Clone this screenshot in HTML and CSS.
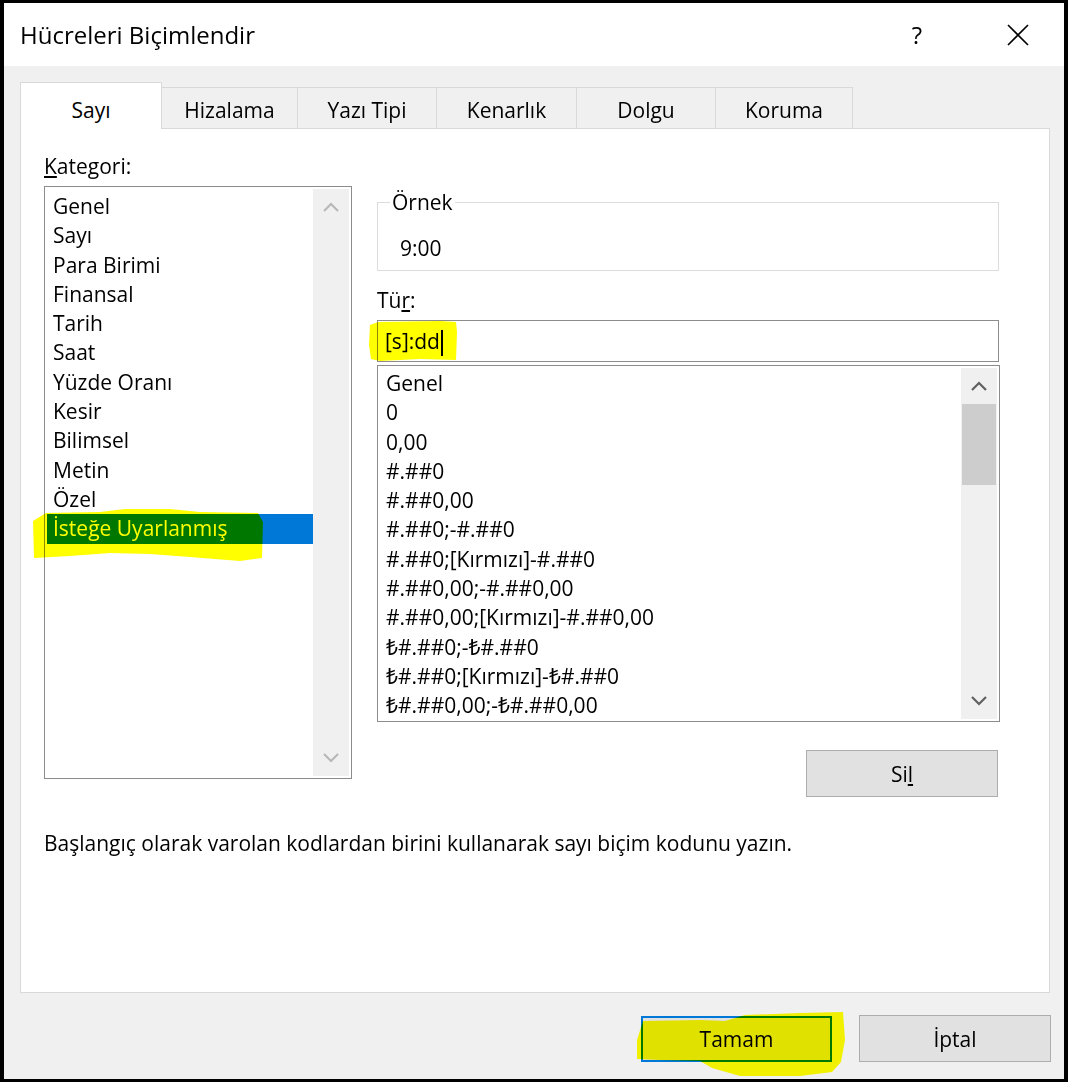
FILE: index.html
```html
<!DOCTYPE html>
<html>
<head>
    <title>Hücreleri Biçimlendir</title>
    <meta charset="utf-8" />
    <link rel="stylesheet" href="styles.css">
</head>
<body>
    <div class="screen">
        <div class="window">
            <div class="titlebar">
                <span class="title">Hücreleri Biçimlendir</span>
                <span class="help">?</span>
                <span class="close">
                    <svg width="22" height="22" viewBox="0 0 22 22"><path d="M1 1 L21 21 M21 1 L1 21" stroke="#000" stroke-width="1.6" fill="none"/></svg>
                </span>
            </div>
            <div class="content">
                <div class="tabs">
                    <div class="tab active" style="width:142px">Sayı</div>
                    <div class="tab" style="width:136px">Hizalama</div>
                    <div class="tab" style="width:139px">Yazı Tipi</div>
                    <div class="tab" style="width:140px">Kenarlık</div>
                    <div class="tab" style="width:139px">Dolgu</div>
                    <div class="tab" style="width:137px">Koruma</div>
                </div>
                <div class="panel">
                    <div class="panel-main">
                        <div class="col-left">
                            <div class="label"><u>K</u>ategori:</div>
                            <div class="listbox cat-list">
                                <ul class="items">
                                    <li>Genel</li>
                                    <li>Sayı</li>
                                    <li>Para Birimi</li>
                                    <li>Finansal</li>
                                    <li>Tarih</li>
                                    <li>Saat</li>
                                    <li>Yüzde Oranı</li>
                                    <li>Kesir</li>
                                    <li>Bilimsel</li>
                                    <li>Metin</li>
                                    <li>Özel</li>
                                    <li class="selected">İsteğe Uyarlanmış</li>
                                </ul>
                                <div class="scrollbar disabled">
                                    <div class="arrow"><svg width="16" height="10" viewBox="0 0 16 10"><path d="M1 9 L8 2 L15 9" /></svg></div>
                                    <div class="arrow"><svg width="16" height="10" viewBox="0 0 16 10"><path d="M1 1 L8 8 L15 1" /></svg></div>
                                </div>
                            </div>
                        </div>
                        <div class="col-right">
                            <fieldset class="sample">
                                <legend>Örnek</legend>
                                <div class="sample-value">9:00</div>
                            </fieldset>
                            <div class="label type-label">Tü<u>r</u>:</div>
                            <div class="type-input">[s]:dd<span class="caret"></span></div>
                            <div class="listbox fmt-list">
                                <ul class="items">
                                    <li>Genel</li>
                                    <li>0</li>
                                    <li>0,00</li>
                                    <li>#.##0</li>
                                    <li>#.##0,00</li>
                                    <li>#.##0;-#.##0</li>
                                    <li>#.##0;[Kırmızı]-#.##0</li>
                                    <li>#.##0,00;-#.##0,00</li>
                                    <li>#.##0,00;[Kırmızı]-#.##0,00</li>
                                    <li>₺#.##0;-₺#.##0</li>
                                    <li>₺#.##0;[Kırmızı]-₺#.##0</li>
                                    <li>₺#.##0,00;-₺#.##0,00</li>
                                </ul>
                                <div class="scrollbar">
                                    <div class="arrow"><svg width="16" height="10" viewBox="0 0 16 10"><path d="M1 9 L8 2 L15 9" /></svg></div>
                                    <div class="thumb"></div>
                                    <div class="track"></div>
                                    <div class="arrow"><svg width="16" height="10" viewBox="0 0 16 10"><path d="M1 1 L8 8 L15 1" /></svg></div>
                                </div>
                            </div>
                            <div class="delete-row">
                                <button class="btn">Si<u>l</u></button>
                            </div>
                        </div>
                    </div>
                    <p class="hint">Başlangıç olarak varolan kodlardan birini kullanarak sayı biçim kodunu yazın.</p>
                </div>
                <div class="footer">
                    <button class="btn btn-default">Tamam</button>
                    <button class="btn">İptal</button>
                </div>
            </div>
        </div>
        <!-- highlighter marks drawn over the screenshot -->
        <svg class="marks" width="1068" height="1082" viewBox="0 0 1068 1082">
            <path d="M33 521 L46 513 L100 512 L125 509 L170 509 L200 512 L258 513 L263 522 L262 558 L240 561 L190 557 L150 554 L110 553 L70 556 L34 558 Z" />
            <path d="M370 325 L378 322 L440 321 L456 322 L457 332 L456 360 L420 359 L380 361 L371 359 L369 345 Z" />
            <path d="M637 1040 L643 1021 L700 1020 L725 1021 L745 1015 L800 1013 L843 1012 L845 1040 L841 1062 L832 1072 L800 1076 L740 1076 L712 1068 L700 1061 L660 1060 L637 1059 Z" />
        </svg>
    </div>
</body>
</html>
```

FILE: styles.css
```css
body{
    margin:0;
    font-family:"Open Sans", "Noto Sans", sans-serif;
    font-size:21px;
    color:#000;
}
.screen{
    position:relative;
    width:1068px;
    height:1082px;
}
.window{
    box-sizing:border-box;
    width:1068px;
    height:1082px;
    border:solid #000;
    border-width:3px 4px 3px 4px;
    background:#f0f0f0;
    display:flex;
    flex-direction:column;
}
.titlebar{
    flex:none;
    height:63px;
    background:#fff;
    display:flex;
    align-items:center;
    padding-left:16px;
}
.title{
    flex:1;
    font-size:24px;
}
.help{
    width:30px;
    text-align:center;
    font-size:24px;
    margin-right:66px;
}
.close{
    width:40px;
    margin-right:26px;
    display:flex;
    justify-content:center;
}
.content{
    flex:1;
    padding:16px 14px 0 16px;
    display:flex;
    flex-direction:column;
}
.tabs{
    display:flex;
    align-items:flex-end;
    height:46px;
}
.tab{
    box-sizing:border-box;
    height:41px;
    border:1px solid #d9d9d9;
    border-left:none;
    border-bottom:none;
    background:#f0f0f0;
    text-align:center;
    line-height:26px;
    padding-top:9px;
}
.tab.active{
    height:47px;
    margin-bottom:-1px;
    border-left:1px solid #d9d9d9;
    background:#fff;
    padding-top:14px;
    position:relative;
    z-index:1;
}
.panel{
    box-sizing:border-box;
    height:865px;
    border:1px solid #d9d9d9;
    background:#fff;
    padding:24px 0 0 23px;
}
.panel-main{
    display:grid;
    grid-template-columns:308px 623px;
    column-gap:25px;
    align-items:start;
}
.label{
    line-height:26px;
    height:26px;
}
.listbox{
    box-sizing:border-box;
    border:1px solid #8c8c8c;
    padding:2px;
    display:flex;
    overflow:hidden;
}
.items{
    list-style:none;
    margin:0;
    padding:3px 0 0 0;
    flex:1;
}
.items li{
    line-height:29.3px;
    height:29.3px;
    padding-left:6px;
    white-space:nowrap;
}
.items li.selected{
    background:#0078d7;
    color:#fff;
}
.cat-list{
    margin-top:7px;
    height:593px;
}
.scrollbar{
    width:36px;
    background:#f0f0f0;
    display:flex;
    flex-direction:column;
}
.scrollbar .arrow{
    height:36px;
    display:flex;
    align-items:center;
    justify-content:center;
}
.scrollbar .arrow path{
    fill:none;
    stroke:#606060;
    stroke-width:2.2;
}
.scrollbar.disabled{
    justify-content:space-between;
}
.scrollbar.disabled .arrow path{
    stroke:#b8b8b8;
}
.scrollbar .thumb{
    height:81px;
    margin:0 1px;
    background:#cdcdcd;
}
.scrollbar .track{
    flex:1;
}
.sample{
    box-sizing:border-box;
    margin:36px 0 0 0;
    width:622px;
    height:82px;
    min-width:0;
    border:1px solid #dcdcdc;
    padding:20px 12px 0;
}
.sample legend{
    padding:0 2px;
    line-height:26px;
}
.sample-value{
    line-height:26px;
    padding-left:10px;
}
.type-label{
    margin-top:16px;
}
.type-input{
    box-sizing:border-box;
    margin-top:7px;
    height:42px;
    width:622px;
    border:1px solid #8c8c8c;
    padding-left:7px;
    line-height:40px;
}
.caret{
    display:inline-block;
    width:2px;
    height:26px;
    margin-left:1px;
    background:#000;
    vertical-align:middle;
}
.fmt-list{
    margin-top:3px;
    height:357px;
}
.fmt-list .items{
    padding-top:1px;
}
.delete-row{
    margin-top:28px;
    display:flex;
    justify-content:flex-end;
    padding-right:2px;
}
.btn{
    box-sizing:border-box;
    width:192px;
    height:47px;
    padding:0;
    background:#e1e1e1;
    border:1px solid #adadad;
    font:inherit;
    color:#000;
}
.btn-default{
    width:191px;
    height:46px;
    margin-top:1px;
    border:2px solid #0078d7;
}
.hint{
    margin:33px 0 0 0;
    line-height:26px;
}
.footer{
    display:flex;
    justify-content:flex-end;
    align-items:flex-start;
    gap:27px;
    padding-top:22px;
    margin-right:-1px;
}
.marks{
    position:absolute;
    left:0;
    top:0;
    mix-blend-mode:multiply;
    pointer-events:none;
}
.marks path{
    fill:#ffff00;
}
```
